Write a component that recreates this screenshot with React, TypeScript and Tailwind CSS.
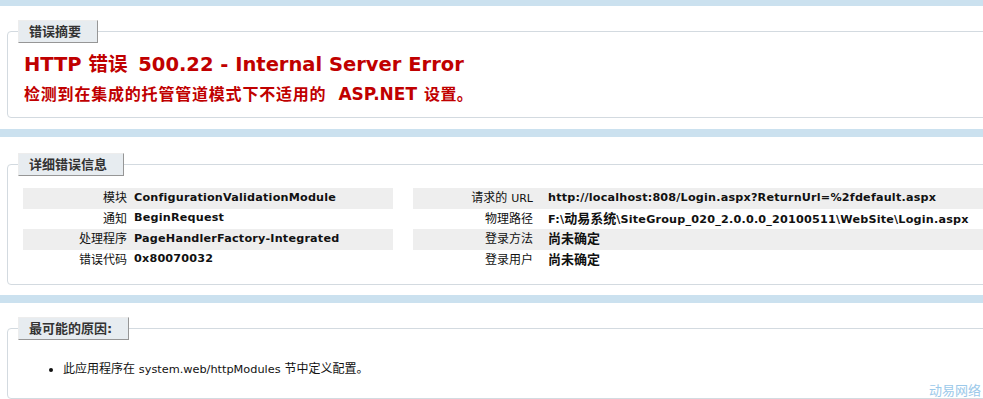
import React from 'react'

interface Row {
  label: React.ReactNode
  value: string
}

const leftRows: Row[] = [
  { label: '模块', value: 'ConfigurationValidationModule' },
  { label: '通知', value: 'BeginRequest' },
  { label: '处理程序', value: 'PageHandlerFactory-Integrated' },
  { label: '错误代码', value: '0x80070032' }
]

const rightRows: Row[] = [
  {
    label: (
      <>
        请求的 <span className="font-['DejaVu_Sans',sans-serif] text-[11px]">URL</span>
      </>
    ),
    value: 'http://localhost:808/Login.aspx?ReturnUrl=%2fdefault.aspx'
  },
  { label: '物理路径', value: 'F:\\动易系统\\SiteGroup_020_2.0.0.0_20100511\\WebSite\\Login.aspx' },
  { label: '登录方法', value: '尚未确定' },
  { label: '登录用户', value: '尚未确定' }
]

// CJK runs get a slightly larger size, as the Chinese glyphs in the page are wider than the latin ones
const renderValue = (value: string) =>
  value.split(/([\u4e00-\u9fff]+)/).map((part, i) =>
    /[\u4e00-\u9fff]/.test(part) ? (
      <span key={i} className="text-[13px] tracking-normal">
        {part}
      </span>
    ) : (
      <span key={i}>{part}</span>
    )
  )

const Legend: React.FC<{ text: string }> = ({ text }) => (
  <legend className="h-[23px] border border-[#ededed] border-r-[#969696] border-b-[#969696] bg-[#e7ecf0] pl-[10px] pr-[16px] text-[13px] leading-[21px] font-bold text-[#333]">
    {text}
  </legend>
)

const DetailTable: React.FC<{ rows: Row[]; labelWidth: string; valueGap: string; width: string }> = ({
  rows,
  labelWidth,
  valueGap,
  width
}) => (
  <div className={width}>
    {rows.map((row, i) => (
      <div key={i} className={`flex items-center h-[20.5px] ${i % 2 === 0 ? 'bg-[#eeeeee]' : ''}`}>
        <div className={`${labelWidth} shrink-0 text-right text-[12px] text-[#111]`}>{row.label}</div>
        <div className={`${valueGap} whitespace-nowrap font-bold text-[11.2px] tracking-[0.2px] text-[#111]`}>
          {renderValue(row.value)}
        </div>
      </div>
    ))}
  </div>
)

export default function App() {
  return (
    <div className="relative w-full h-[399px] overflow-hidden bg-[#cbe1ef] font-['DejaVu_Sans','Noto_Sans_CJK_SC',sans-serif] text-black">
      <div className="w-[1100px] flex flex-col">
        {/* 错误摘要 */}
        <div className="mt-[6px] bg-white pl-[7px] pt-[14px] pb-[11px]">
          <fieldset className="w-[1090px] border border-[#d3dae0] rounded-[4px] px-[10px] pb-[12px]">
            <Legend text="错误摘要" />
            <div className="pl-[6px] text-[#c00000] font-bold">
              <div className="mt-[10px] text-[19.5px] leading-[24px] whitespace-nowrap">
                HTTP 错误 <span className="ml-[4px]">500.22 - Internal Server Error</span>
              </div>
              <div className="mt-[7px] text-[16px] leading-[20px] whitespace-nowrap">
                <span className="tracking-[0.8px]">检测到在集成的托管管道模式下不适用的</span>
                <span className="ml-[12px] text-[17px]">ASP.NET</span>
                <span className="ml-[7px] tracking-[0.4px]">设置。</span>
              </div>
            </div>
          </fieldset>
        </div>

        {/* 详细错误信息 */}
        <div className="mt-[8px] bg-white pl-[7px] pt-[16px] pb-[10px]">
          <fieldset className="w-[1090px] border border-[#d3dae0] rounded-[4px] px-[10px] pb-[14px]">
            <Legend text="详细错误信息" />
            <div className="mt-[12px] pl-[5px] flex gap-[20px]">
              <DetailTable rows={leftRows} width="w-[370px]" labelWidth="w-[111px] pr-[7px]" valueGap="pl-0" />
              <DetailTable rows={rightRows} width="w-[700px]" labelWidth="w-[128px] pr-[8px]" valueGap="pl-[7px]" />
            </div>
          </fieldset>
        </div>

        {/* 最可能的原因 */}
        <div className="mt-[8px] bg-white pl-[7px] pt-[14px] pb-[10px]">
          <fieldset className="w-[1090px] border border-[#d3dae0] rounded-[4px] px-[10px] pb-[19px]">
            <Legend text="最可能的原因:" />
            <ul className="mt-[20px] pl-[45px] list-disc text-[12px] leading-[18px] text-[#111]">
              <li>
                此应用程序在 <span className="text-[11.3px]">system.web/httpModules</span> 节中定义配置。
              </li>
            </ul>
          </fieldset>
        </div>
      </div>

      <div className="absolute right-[2px] bottom-[1px] text-[13px] leading-[14px] text-[#9cc9ea]">动易网络</div>
    </div>
  )
}
